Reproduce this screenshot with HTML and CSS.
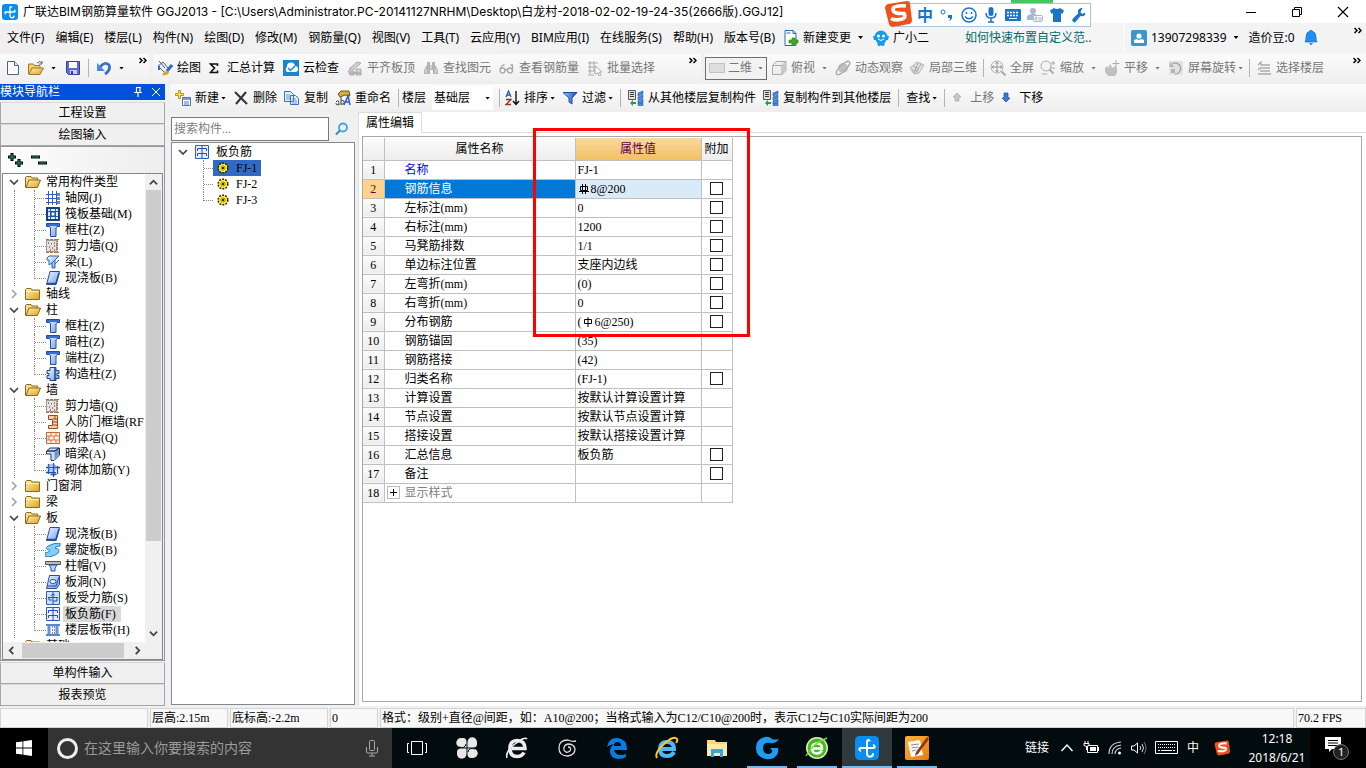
FILE: index.html
```html
<!DOCTYPE html>
<html lang="zh-CN">
<head>
<meta charset="utf-8">
<title>广联达BIM钢筋算量软件 GGJ2013</title>
<link rel="stylesheet" href="styles.css">
</head>
<body>
<svg class="defs" aria-hidden="true">
  <defs>
    <linearGradient id="gFold" x1="0" y1="0" x2="1" y2="1"><stop offset="0" stop-color="#fff0b0"/><stop offset="1" stop-color="#e0a020"/></linearGradient>
    <linearGradient id="gBlue" x1="0" y1="0" x2="1" y2="1"><stop offset="0" stop-color="#f4f8ff"/><stop offset="1" stop-color="#6f9ee8"/></linearGradient>
    <linearGradient id="gFun" x1="0" y1="0" x2="1" y2="0"><stop offset="0" stop-color="#9cc4fa"/><stop offset="1" stop-color="#1a4fc0"/></linearGradient>
    <linearGradient id="gOrange" x1="0" y1="0" x2="1" y2="1"><stop offset="0" stop-color="#ffb43a"/><stop offset="1" stop-color="#e87a10"/></linearGradient>
  </defs>
  <symbol id="app" viewBox="0 0 16 16"><rect width="16" height="16" rx="3" fill="#0a8df0"/><path d="M8 3v9a2 2 0 0 0 4-.5M3 8h10M3 8a1.5 1.5 0 0 0 1 2M13 8a1.5 1.5 0 0 0-1-2M8 3a1.500 1.500 0 0 1 2 .5" fill="none" stroke="#fff" stroke-width="1.300"/></symbol>
  <symbol id="sogou" viewBox="0 0 28 28"><path d="M4 4 23 1q3 0 3 3l2 16q0 3-3 4L9 27q-3 0-4-3L1 8q0-3 3-4z" fill="#f0501e"/><path d="M22 6Q9 5 9 9.500t11 4q3 5-4 6-6 1-9-1" fill="none" stroke="#fff" stroke-width="3.600"/></symbol>
  <symbol id="newch" viewBox="0 0 16 16"><path d="M2 .5h8l3 3v12H2z" fill="#fff" stroke="#2a6aa8"/><path d="M10 .5v3h3M3.500 3h4" fill="none" stroke="#2a6aa8"/><path d="M9 8h3v2h3v3h-3v3H9v-3H6v-3h3z" fill="#3fae1e" stroke="#1d7a10" stroke-width=".6"/></symbol>
  <symbol id="mascot" viewBox="0 0 16 16"><circle cx="8" cy="7" r="6.500" fill="#159be8"/><path d="M0 6h3v4H1zM16 6h-3v4h2zM4 12h8l-1 4H9l-1-1-1 1H5z" fill="#159be8"/><circle cx="5.500" cy="6" r="1.500" fill="#fff"/><circle cx="10.500" cy="6" r="1.500" fill="#fff"/><path d="M5 9q3 3 6 0" fill="none" stroke="#fff"/></symbol>
  <symbol id="user" viewBox="0 0 16 16"><rect width="16" height="16" rx="2" fill="#3c96cc"/><circle cx="8" cy="6" r="2.600" fill="#fff"/><path d="M3 13v-3l3-1q2 2 4 0l3 1v3z" fill="#fff"/></symbol>
  <symbol id="bell" viewBox="0 0 16 16"><path d="M8 0q1 0 1 1 4 1 4 6 0 4 1 5H2q1-1 1-5 0-5 4-6 0-1 1-1z" fill="#1f8ff5" stroke="#1560b0" stroke-width=".6"/><path d="M6 13h4l-2 2.500z" fill="#1f8ff5"/></symbol>
  <symbol id="doc" viewBox="0 0 16 16"><path d="M2.500 1.500h7l4 4v9h-11z" fill="#fff" stroke="#4a6484"/><path d="M9.500 1.500v4h4" fill="#dbe8f6" stroke="#4a6484"/></symbol>
  <symbol id="open" viewBox="0 0 16 16"><path d="M.5 14V4h5l1 1.500H12V8" fill="#f5cf6c" stroke="#9c7a22"/><path d="M1 14.500 4 8h11.500L12 14.500z" fill="url(#gFold)" stroke="#9c7a22"/><path d="M9 3q3-3 5 0m0-2v3h-3" fill="none" stroke="#506878"/></symbol>
  <symbol id="save" viewBox="0 0 16 16"><path d="M1.500 1.500h13v13h-11l-2-2z" fill="#5f6ad2" stroke="#3a3f9c"/><path d="M4 2h8v6H4z" fill="#fff"/><path d="M5 10h7v4H5z" fill="#c8ccf4"/><path d="M6 11h2v3H6z" fill="#333a90"/></symbol>
  <symbol id="undo" viewBox="0 0 16 16"><path d="M4 7q5-6 9-2 2 5-4 9" fill="none" stroke="#3d6fd0" stroke-width="2.800"/><path d="M1 3v8h8z" fill="#4f86e6"/></symbol>
  <symbol id="paint" viewBox="0 0 16 16"><path d="m1 6 5-4 6 7-4 4z" fill="#e8f0fa" stroke="#49627e"/><path d="M2 1l6 7" stroke="#49627e" fill="none"/><path d="m15 5-5 6" stroke="#2f6cc8" stroke-width="3"/><path d="M7 12q3-2 5 0-1 4-7 3z" fill="#d8a520"/><path d="M2 6v4" stroke="#2f6cc8" stroke-width="2"/></symbol>
  <symbol id="sigma" viewBox="0 0 10 16"><path d="M8.500 6V4h-7l4 4-4 4.500h7v-2" fill="none" stroke="#111" stroke-width="1.600"/></symbol>
  <symbol id="cloud" viewBox="0 0 16 16"><rect width="16" height="16" fill="#1785d0"/><path d="M4 12a3 3 0 0 1 0-5 4 4 0 0 1 8-1 3 3 0 0 1 0 6z" fill="#fff"/><path d="m5 8 2.500 2.500L12 6" fill="none" stroke="#1785d0" stroke-width="1.500"/></symbol>
  <symbol id="align" viewBox="0 0 16 16"><path d="m2 9 8-7 4 1-8 7zM1 11h6v4H3zM9 9h5v6H9z" fill="#cfcfcf" stroke="#aaa"/><path d="M3 13h11" stroke="#999"/></symbol>
  <symbol id="binoc" viewBox="0 0 16 16"><path d="M4 2h3v3h2V2h3v3l3 5v4h-5v-4H7v4H1v-4l3-5z" fill="#b4b4b4"/><path d="M3 9v4M13 9v4M8 5v4" stroke="#eee"/></symbol>
  <symbol id="glass" viewBox="0 0 16 16"><g fill="none" stroke="#a8a8a8" stroke-width="1.300"><circle cx="3.500" cy="10.500" r="2.500"/><circle cx="11" cy="10.500" r="2.500"/><path d="M1.500 8.500q2-4 4-3.500M6 10h2.500M13.500 10V5h-2"/></g></symbol>
  <symbol id="batch" viewBox="0 0 16 16"><path d="M1 3h10M1 7h9M1 11h7M3 1v13M7 1v10M1 15h6" stroke="#aaa" fill="none"/><path d="m8 6 7 6-3 .3 2 2.700-2 1-1-3-3 1z" fill="#fff" stroke="#aaa"/></symbol>
  <symbol id="flat" viewBox="0 0 16 16"><path d="M.5 3.500h15v9H.5z" fill="#dedede" stroke="#c0c0c0"/></symbol>
  <symbol id="cube" viewBox="0 0 16 16"><path d="M1.500 5.500 5 1.500h10v9l-4 4H1.500z" fill="#eee" stroke="#aaa"/><path d="M1.500 5.500H11v9M11 5.500l4-4" fill="none" stroke="#aaa"/><path d="M11 6l3.500-3.500v8L11 14z" fill="#c6c6c6"/></symbol>
  <symbol id="orbit" viewBox="0 0 16 16"><circle cx="8" cy="8" r="5" fill="#c0c0c0"/><ellipse cx="8" cy="8" rx="9" ry="3" transform="rotate(-45 8 8)" fill="none" stroke="#aaa" stroke-width="1.300"/></symbol>
  <symbol id="part3d" viewBox="0 0 16 16"><path d="m1 8 7-6 7 3-5 8-5 1z" fill="#e2e2e2" stroke="#b4b4b4"/><path d="m4 6 6 3M9 3l-4 10M12 4l-5 9M3 10l6 1" stroke="#aaa" fill="none"/></symbol>
  <symbol id="full" viewBox="0 0 16 16"><circle cx="7" cy="7" r="6" fill="#f4f4f4" stroke="#aaa"/><path d="M7 2v10M2 7h10M5.500 4 7 2l1.500 2M5.500 10 7 12l1.500-2M4 5.500 2 7l2 1.500M10 5.500 12 7l-2 1.500" fill="none" stroke="#999"/><path d="m11.500 11.500 4 4" stroke="#aaa" stroke-width="2"/></symbol>
  <symbol id="zoomi" viewBox="0 0 16 16"><circle cx="6" cy="6" r="5" fill="#f4f4f4" stroke="#aaa"/><path d="m9.500 9.500 4 4" stroke="#aaa" stroke-width="2"/><path d="M11 3h4M13 1v4M11 8h4M2 14h5" stroke="#aaa"/></symbol>
  <symbol id="hand" viewBox="0 0 16 16"><path d="M1 8l2-2 2 2V5l2-.5L8 8l3-2 2 2v5l-2 3H4l-3-4z" fill="#c0c0c0"/><path d="M12 0v7M8.500 3.500h7" stroke="#aaa"/></symbol>
  <symbol id="rot" viewBox="0 0 16 16"><path d="M1 1h14v14H1z" fill="#e2e2e2"/><path d="M4 4a5.500 5.500 0 1 1 3 10" fill="none" stroke="#aaa" stroke-width="1.500"/><path d="M1.500 2v5h5zM3 9h4v4H3z" fill="#b4b4b4"/></symbol>
  <symbol id="floors" viewBox="0 0 16 16"><path d="m2 5 3-3v3h9M4 8h10M4 11h10M2 14h13M4 8 2 10" fill="none" stroke="#aaa" stroke-width="1.300"/></symbol>
  <symbol id="newc" viewBox="0 0 16 16"><path d="M3.500.5h2v3h3v2h-3v3h-2v-3h-3v-2h3z" fill="#ffe04a" stroke="#a8820a" stroke-width=".8"/><path d="M7.500 7.500h8v8h-8z" fill="#fff" stroke="#4a78c0"/><path d="M8 8h7v2H8z" fill="#78a0e0"/><path d="M9 12h5M9 14h5" stroke="#4a78c0"/></symbol>
  <symbol id="del" viewBox="0 0 16 16"><path d="m2 2 12 12M13 2 3 14" stroke="#333" stroke-width="2"/></symbol>
  <symbol id="copy" viewBox="0 0 16 16"><path d="M.5 1.500h6l3 3v7h-9zM6.500 5.500h5l3 3v6h-8z" fill="#e4efff" stroke="#3f70b8"/><path d="M2 5h4M2 7h4M2 9h4M8 9h4M8 11h5M8 13h5" stroke="#6a98dc"/></symbol>
  <symbol id="rename" viewBox="0 0 16 16"><path d="m3 4 3-3h8l1 5-5-1-5 2z" fill="#d9ac3e" stroke="#6e5a20"/><path d="M1 12q3-4 3 3-4 0-3-2M6 7v8M6 11q4-2 3 3H6" fill="none" stroke="#444"/><path d="m9 15 4-9 2 9M10 12h5" fill="none" stroke="#2f5fc8" stroke-width="1.500"/></symbol>
  <symbol id="sort" viewBox="0 0 16 16"><path d="m2 7 2.500-6L7 7M3 5h3" fill="none" stroke="#2a55b0" stroke-width="1.300"/><path d="M2 9.500h5l-5 5h5" fill="none" stroke="#a02828" stroke-width="1.300"/><path d="M12 1v13m-3-3 3 3.500 3-3.500" fill="none" stroke="#111" stroke-width="1.400"/></symbol>
  <symbol id="filter" viewBox="0 0 16 16"><path d="M1 2.500h14L10 8v6l-3-2V8z" fill="url(#gFun)" stroke="#1c4fae"/></symbol>
  <symbol id="fromf" viewBox="0 0 16 16"><path d="M.5.500h7v9h-7z" fill="#e4e4e4" stroke="#555"/><path d="M2 2.500h4M2 4.500h4M2 6.500h4" stroke="#333"/><path d="m10 3 5-2v3l-5 2zM10 7l5-2v3l-5 2zM10 11l5-2v3l-5 2zM10 14.500l5-2v3h-5z" fill="#4a8ae0" stroke="#1c56a8" stroke-width=".6"/><path d="M2 13l3-3v2h3v2H5v2z" fill="#22a040"/></symbol>
  <symbol id="up" viewBox="0 0 10 16"><path d="m5 3 4 4H7v4H3V7H1z" fill="#c6c6c6" stroke="#aaa" stroke-width=".7"/></symbol>
  <symbol id="down" viewBox="0 0 10 16"><path d="m5 12 4-4H7V3H3v5H1z" fill="#3e76e0" stroke="#1b479c" stroke-width=".7"/></symbol>
  <symbol id="more" viewBox="0 0 8 8"><path d="m.5 1 2.500 2.500L.5 6M4.500 1 7 3.500 4.500 6" fill="none" stroke="#000" stroke-width="1.500"/></symbol>
  <symbol id="mag" viewBox="0 0 16 16"><circle cx="9" cy="6.500" r="4" fill="#e6f4ff" stroke="#4a9ce0" stroke-width="1.800"/><path d="m6 9.500-4 4" stroke="#3a8ad0" stroke-width="2.200"/></symbol>
  <symbol id="fo" viewBox="0 0 16 14"><path d="M.5 12.500v-10l1-1H6l1 1.500h5.500v2" fill="#f7d982" stroke="#8a6a1a"/><path d="M1 12.500 4 5h11.500L12.500 12.500z" fill="url(#gFold)" stroke="#8a6a1a"/></symbol>
  <symbol id="fc" viewBox="0 0 16 14"><path d="M.5 12.500v-10l1-1H6l1 1.500h7.500v9.500z" fill="url(#gFold)" stroke="#8a6a1a"/><path d="M1 4.500h13" stroke="#fff3c0"/></symbol>
  <symbol id="grid" viewBox="0 0 14 14"><path d="M0 3.500h13M0 7.500h13M0 11.500h13M2.500 0v14M6.500 0v14M10.500 0v14" stroke="#2f5cc0"/><path d="M11 2h3v3h-3zM11 6h3v3h-3zM11 10h3v3h-3z" fill="#5f88d8"/></symbol>
  <symbol id="raft" viewBox="0 0 14 14"><path d="M1 1h12v12H1z" fill="#dce9ff" stroke="#14408c" stroke-width="2"/><path d="M4.500 2v10M9.500 2v10M2 4.500h10M2 9.500h10" stroke="#2c60b8"/><path d="M5 5h4v4H5z" fill="#fff" stroke="#14408c"/></symbol>
  <symbol id="col" viewBox="0 0 14 14"><path d="M.5.500h13v3H11l-1 1.500v8.500H4.500V5L3.500 3.500h-3z" fill="url(#gBlue)" stroke="#1f4fa8"/><path d="M1 1h12v2H1z" fill="#3a70cc"/></symbol>
  <symbol id="wall" viewBox="0 0 14 14"><path d="M.5 1.500h10v11H.5z" fill="#e6e3e0" stroke="#a0968c"/><path d="M0 .5h13M0 13.500h13M11.500 0v14" stroke="#cc6a2a" stroke-dasharray="3 1"/><path d="M2 4h1M5 5h1M8 4h1M3 8h1M6 9h1M8 7h1M4 11h1M8 11h1" stroke="#222"/></symbol>
  <symbol id="beam" viewBox="0 0 14 14"><path d="m1 3 2-2h10L9 5v8H6V8L3 10V5H1z" fill="url(#gBlue)" stroke="#2a68b8"/><path d="m6 8 6-6M9 9l4-4" stroke="#2a68b8"/></symbol>
  <symbol id="slab" viewBox="0 0 14 14"><path d="M4 .5h9.500L10 13.500H.5z" fill="url(#gBlue)" stroke="#1f4fa8"/><path d="M1 12.500h9L13 2" fill="none" stroke="#1f4fa8" stroke-width="1.600"/></symbol>
  <symbol id="ccol" viewBox="0 0 14 14"><path d="M4 .5h6v3h3v3h-2v2h2v3h-3v2H4v-2H1v-3h2v-2H1v-3h3z" fill="url(#gBlue)" stroke="#1a4488"/><path d="M9 1v12" stroke="#1a4488" stroke-width="1.500"/></symbol>
  <symbol id="rf" viewBox="0 0 14 14"><path d="M2.500.500h9v13h-9v-3h4v-6h-4z" fill="#f8cfae" stroke="#9a4a1c"/><path d="M7 4h4M7 7h4M7 10h4M9 1v3" stroke="#9a4a1c"/></symbol>
  <symbol id="brick" viewBox="0 0 14 14"><path d="M.5 1.500h13v11H.5z" fill="#fff0e4" stroke="#c06a38"/><path d="M1 5h12M1 9h12M5 2v3M10 2v3M3 5v4M8 5v4M5 9v4M10 9v4" stroke="#d07a48"/></symbol>
  <symbol id="hbeam" viewBox="0 0 14 14"><path d="M.5 4 4 1h9.500v7L8 13.500H5V7H.5z" fill="#cfe0fa" stroke="#1c3866"/><path d="M1 4h8l4-3" stroke="#1c3866" fill="none" stroke-width="1.500"/><path d="M8.500 5 13 2v5l-4.500 5z" fill="#6f94cc"/></symbol>
  <symbol id="brebar" viewBox="0 0 14 14"><path d="M0 4.500h14M0 9.500h10M2.500 1v10M7.500 0v14M4.500 11.500h6M11.500 3v8" stroke="#1f4fb8" stroke-width="1.300"/><path d="M3 2h6v5H3z" fill="none" stroke="#4f86e0"/></symbol>
  <symbol id="spiral" viewBox="0 0 16 14"><path d="M15 0Q8 0 3 3q-4 3 1 4 3 1-4 3v4q9 0 13-4 3-4-3-5 0-2 5-2z" fill="#84cdf4" stroke="#2a80c8"/></symbol>
  <symbol id="cap" viewBox="0 0 16 14"><path d="M.5 2.500h15v3H.5z" fill="#bbb" stroke="#555"/><path d="M4 6h8l-2 3v3H6V9z" fill="#bcd6ff" stroke="#1f4fb8"/></symbol>
  <symbol id="hole" viewBox="0 0 14 14"><path d="M3.500.500h10v9l-3 4H.5z" fill="url(#gBlue)" stroke="#1f4fa8"/><ellipse cx="7" cy="6.500" rx="3" ry="2" fill="#fff" stroke="#1f4fa8"/><path d="M1 11h9l3-9" fill="none" stroke="#1f4fa8"/></symbol>
  <symbol id="sreb" viewBox="0 0 14 14"><path d="M.5.500h13v13H.5z" fill="#cfe0fc" stroke="#2a5cc0"/><path d="M7 1v12M2 6.500h10M3 6v3h3M11 7v3H7M9 4q-3-2-4 1" fill="none" stroke="#2450a0"/></symbol>
  <symbol id="neg" viewBox="0 0 14 14"><path d="M.5.500h13v13H.5z" fill="#e8f0ff" stroke="#2a5cc0"/><path d="M7 1v12M2.500 6V3.500h9V6M2.500 11V8.500h9V11" fill="none" stroke="#1f4fb8"/></symbol>
  <symbol id="band" viewBox="0 0 16 14"><path d="M1 2h14M1 12h14" stroke="#2a5cc0" stroke-width="1.500"/><path d="M4 3v8M12 3v8" stroke="#5f92e0" stroke-width="3"/><path d="M7.500 3v8M9.500 3v8" stroke="#555" stroke-width=".7" stroke-dasharray="2 1"/></symbol>
  <symbol id="gear" viewBox="0 0 12 12"><circle cx="6" cy="6" r="4.600" fill="#ffee20" stroke="#2a2600" stroke-width="2" stroke-dasharray="1.800 1.100"/><circle cx="6" cy="6" r="4" fill="#ffee20"/><path d="M6 3v6M3 6h6M4 4l4 4M8 4 4 8" stroke="#5a5200" stroke-width=".6"/><circle cx="6" cy="6" r="1" fill="#111"/></symbol>
  <symbol id="chd" viewBox="0 0 10 10"><path d="m1 3 4 4 4-4" fill="none" stroke="#444" stroke-width="1.700"/></symbol>
  <symbol id="chr" viewBox="0 0 10 10"><path d="m3 1 4 4-4 4" fill="none" stroke="#a0a0a0" stroke-width="1.500"/></symbol>
  <symbol id="win" viewBox="0 0 16 16"><path d="M0 2.300 6.500 1.400v6.200H0zM7.300 1.300 16 0v7.600H7.300zM0 8.400h6.500v6.200L0 13.700zM7.300 8.400H16V16l-8.700-1.300z" fill="#fff"/></symbol>
</svg>

<div class="window">
  <header class="titlebar">
    <svg class="i16"><use href="#app"/></svg>
    <h1 class="title">广联达BIM钢筋算量软件 GGJ2013 - [C:\Users\Administrator.PC-20141127NRHM\Desktop\白龙村-2018-02-02-19-24-35(2666版).GGJ12]</h1>
    <div class="winbtns">
      <button aria-label="最小化"><svg viewBox="0 0 12 12"><path d="M1 6.500h10" stroke="#000"/></svg></button>
      <button aria-label="还原"><svg viewBox="0 0 12 12"><path d="M1.500 3.500h7v7h-7zM3.500 3.500v-2h7v7h-2" fill="none" stroke="#000"/></svg></button>
      <button aria-label="关闭"><svg viewBox="0 0 12 12"><path d="m1 1 10 10M11 1 1 11" stroke="#000" stroke-width="1.200"/></svg></button>
    </div>
  </header>

  <div class="menurow">
    <nav class="menus">
      <button>文件(F)</button><button>编辑(E)</button><button>楼层(L)</button><button>构件(N)</button><button>绘图(D)</button><button>修改(M)</button><button>钢筋量(Q)</button><button>视图(V)</button><button>工具(T)</button><button>云应用(Y)</button><button>BIM应用(I)</button><button>在线服务(S)</button><button>帮助(H)</button><button>版本号(B)</button>
      <button class="tool"><svg class="i16"><use href="#newch"/></svg>新建变更<i class="caret wide"></i></button>
      <button class="tool"><svg class="i16"><use href="#mascot"/></svg>广小二</button>
    </nav>
    <a class="tip" href="#">如何快速布置自定义范..</a>
    <div class="account">
      <button class="tool"><svg class="i16"><use href="#user"/></svg>13907298339<i class="caret wide"></i></button>
      <button>造价豆:0</button>
      <button aria-label="通知"><svg class="i16"><use href="#bell"/></svg></button>
      <svg class="more"><use href="#more"/></svg>
    </div>
  </div>

  <div class="toolrow">
    <div class="bar bar-file">
      <button class="tool" aria-label="新建"><svg class="i16"><use href="#doc"/></svg></button>
      <button class="tool" aria-label="打开"><svg class="i16"><use href="#open"/></svg><i class="caret wide"></i></button>
      <button class="tool" aria-label="保存"><svg class="i16"><use href="#save"/></svg></button>
      <i class="sep"></i>
      <button class="tool" aria-label="撤销"><svg class="i16"><use href="#undo"/></svg><i class="caret wide"></i></button>
      <svg class="more"><use href="#more"/></svg>
    </div>
    <div class="bar bar-draw">
      <button class="tool"><svg class="i16"><use href="#paint"/></svg>绘图</button>
      <button class="tool sum"><svg class="i10"><use href="#sigma"/></svg>汇总计算</button>
      <button class="tool"><svg class="i16"><use href="#cloud"/></svg>云检查</button>
      <button class="tool" disabled><svg class="i16"><use href="#align"/></svg>平齐板顶</button>
      <button class="tool" disabled><svg class="i16"><use href="#binoc"/></svg>查找图元</button>
      <button class="tool" disabled><svg class="i16"><use href="#glass"/></svg>查看钢筋量</button>
      <button class="tool" disabled><svg class="i16"><use href="#batch"/></svg>批量选择</button>
      <svg class="more"><use href="#more"/></svg>
    </div>
    <div class="bar bar-view">
      <label class="dim-pick"><svg class="i16"><use href="#flat"/></svg><select aria-label="视图维度" disabled><option>二维</option></select><i class="caret"></i></label>
      <button class="tool" disabled><svg class="i16"><use href="#cube"/></svg>俯视<i class="caret wide"></i></button>
      <button class="tool" disabled><svg class="i16"><use href="#orbit"/></svg>动态观察</button>
      <button class="tool" disabled><svg class="i16"><use href="#part3d"/></svg>局部三维</button>
      <i class="sep"></i>
      <button class="tool" disabled><svg class="i16"><use href="#full"/></svg>全屏</button>
      <button class="tool" disabled><svg class="i16"><use href="#zoomi"/></svg>缩放<i class="caret wide"></i></button>
      <button class="tool" disabled><svg class="i16"><use href="#hand"/></svg>平移<i class="caret wide"></i></button>
      <button class="tool" disabled><svg class="i16"><use href="#rot"/></svg>屏幕旋转<i class="caret"></i></button>
      <i class="sep"></i>
      <button class="tool" disabled><svg class="i16"><use href="#floors"/></svg>选择楼层</button>
      <svg class="more"><use href="#more"/></svg>
    </div>
  </div>

  <main class="workspace">
    <aside class="nav">
      <div class="nav-title"><h2>模块导航栏</h2>
        <svg viewBox="0 0 10 10"><path d="M3 .5h5M3.500 1v4M7 1v4M1 5.500h8M5 6v4" fill="none" stroke="#fff" stroke-width="1.200"/></svg>
        <svg viewBox="0 0 10 10"><path d="m1 1 8 8M9 1 1 9" stroke="#fff"/></svg>
      </div>
      <button class="nav-btn">工程设置</button>
      <button class="nav-btn">绘图输入</button>
      <div class="nav-box">
        <div class="nav-tools">
          <svg viewBox="0 0 18 16"><path d="M5 1v8M1 5h8M12 7v8M8 11h8" stroke="#000" stroke-width="3"/><path d="M5 2v6M2 5h6M12 8v6M9 11h6" stroke="#169a8c"/></svg>
          <svg viewBox="0 0 18 16"><path d="M1 5h9M8 11h9" stroke="#000" stroke-width="3"/><path d="M2 5h7M9 11h7" stroke="#169a8c"/></svg>
        </div>
        <div class="tree-box">
          <div class="tree-view">
            <ul class="tree">
              <li><div class="grp"><svg class="ch"><use href="#chd"/></svg><svg class="fold"><use href="#fo"/></svg>常用构件类型</div>
                <ul><li><svg><use href="#grid"/></svg><span>轴网(J)</span></li><li><svg><use href="#raft"/></svg><span>筏板基础(M)</span></li><li><svg><use href="#col"/></svg><span>框柱(Z)</span></li><li><svg><use href="#wall"/></svg><span>剪力墙(Q)</span></li><li><svg><use href="#beam"/></svg><span>梁(L)</span></li><li><svg><use href="#slab"/></svg><span>现浇板(B)</span></li></ul></li>
              <li><div class="grp"><svg class="ch"><use href="#chr"/></svg><svg class="fold"><use href="#fc"/></svg>轴线</div></li>
              <li><div class="grp"><svg class="ch"><use href="#chd"/></svg><svg class="fold"><use href="#fo"/></svg>柱</div>
                <ul><li><svg><use href="#col"/></svg><span>框柱(Z)</span></li><li><svg><use href="#col"/></svg><span>暗柱(Z)</span></li><li><svg><use href="#col"/></svg><span>端柱(Z)</span></li><li><svg><use href="#ccol"/></svg><span>构造柱(Z)</span></li></ul></li>
              <li><div class="grp"><svg class="ch"><use href="#chd"/></svg><svg class="fold"><use href="#fo"/></svg>墙</div>
                <ul><li><svg><use href="#wall"/></svg><span>剪力墙(Q)</span></li><li><svg><use href="#rf"/></svg><span>人防门框墙(RF</span></li><li><svg><use href="#brick"/></svg><span>砌体墙(Q)</span></li><li><svg><use href="#hbeam"/></svg><span>暗梁(A)</span></li><li><svg><use href="#brebar"/></svg><span>砌体加筋(Y)</span></li></ul></li>
              <li><div class="grp"><svg class="ch"><use href="#chr"/></svg><svg class="fold"><use href="#fc"/></svg>门窗洞</div></li>
              <li><div class="grp"><svg class="ch"><use href="#chr"/></svg><svg class="fold"><use href="#fc"/></svg>梁</div></li>
              <li><div class="grp"><svg class="ch"><use href="#chd"/></svg><svg class="fold"><use href="#fo"/></svg>板</div>
                <ul><li><svg><use href="#slab"/></svg><span>现浇板(B)</span></li><li><svg><use href="#spiral"/></svg><span>螺旋板(B)</span></li><li><svg><use href="#cap"/></svg><span>柱帽(V)</span></li><li><svg><use href="#hole"/></svg><span>板洞(N)</span></li><li><svg><use href="#sreb"/></svg><span>板受力筋(S)</span></li><li class="cur"><svg><use href="#neg"/></svg><span>板负筋(F)</span></li><li><svg><use href="#band"/></svg><span>楼层板带(H)</span></li></ul></li>
              <li><div class="grp"><svg class="ch"><use href="#chr"/></svg><svg class="fold"><use href="#fc"/></svg>基础</div></li>
            </ul>
          </div>
          <div class="vbar"><svg viewBox="0 0 10 10"><path d="m1 7 4-4 4 4" fill="none" stroke="#444" stroke-width="2"/></svg><i></i><svg viewBox="0 0 10 10"><path d="m1 3 4 4 4-4" fill="none" stroke="#444" stroke-width="2"/></svg></div>
          <div class="hbar"><svg viewBox="0 0 10 10"><path d="M7 1 3 5l4 4" fill="none" stroke="#444" stroke-width="2"/></svg><i></i><svg viewBox="0 0 10 10"><path d="m3 1 4 4-4 4" fill="none" stroke="#444" stroke-width="2"/></svg></div>
        </div>
      </div>
      <button class="nav-btn">单构件输入</button>
      <button class="nav-btn">报表预览</button>
    </aside>

    <section class="work">
      <div class="bar bar-edit">
        <button class="tool"><svg class="i16"><use href="#newc"/></svg>新建<i class="caret"></i></button>
        <button class="tool"><svg class="i16"><use href="#del"/></svg>删除</button>
        <button class="tool"><svg class="i16"><use href="#copy"/></svg>复制</button>
        <button class="tool"><svg class="i16"><use href="#rename"/></svg>重命名</button>
        <div class="floor"><i class="sep"></i><label for="floor">楼层</label>
          <span class="floor-pick"><select id="floor"><option>基础层</option></select><i class="caret"></i></span><i class="sep"></i></div>
        <button class="tool"><svg class="i16"><use href="#sort"/></svg>排序<i class="caret"></i></button>
        <button class="tool"><svg class="i16"><use href="#filter"/></svg>过滤<i class="caret"></i></button>
        <i class="sep"></i>
        <button class="tool"><svg class="i16"><use href="#fromf"/></svg>从其他楼层复制构件</button>
        <button class="tool"><svg class="i16"><use href="#fromf"/></svg>复制构件到其他楼层</button>
        <i class="sep"></i>
        <button class="tool">查找<i class="caret"></i></button>
        <i class="sep"></i>
        <button class="tool arrow" disabled><svg class="i10"><use href="#up"/></svg>上移</button>
        <button class="tool arrow"><svg class="i10"><use href="#down"/></svg>下移</button>
      </div>
      <div class="panes">
        <div class="comp">
          <div class="search"><input type="text" placeholder="搜索构件..." aria-label="搜索构件"><button aria-label="搜索"><svg class="i16"><use href="#mag"/></svg></button></div>
          <div class="comp-tree">
            <div class="root"><svg class="ch"><use href="#chd"/></svg><svg class="ri"><use href="#neg"/></svg>板负筋</div>
            <ul><li class="on"><span><svg><use href="#gear"/></svg>FJ-1</span></li><li><span><svg><use href="#gear"/></svg>FJ-2</span></li><li><span><svg><use href="#gear"/></svg>FJ-3</span></li></ul>
          </div>
        </div>
        <div class="props">
          <div class="tabs"><button class="tab">属性编辑</button></div>
          <div class="pane"><div class="sheet">
            <table>
              <colgroup><col class="c1"><col class="c2"><col class="c3"><col class="c4"></colgroup>
              <thead><tr><th></th><th>属性名称</th><th class="hot">属性值</th><th>附加</th></tr></thead>
              <tbody>
                <tr><th>1</th><td class="blue">名称</td><td>FJ-1</td><td></td></tr>
                <tr class="sel"><th>2</th><td>钢筋信息</td><td><svg class="dia" viewBox="0 0 12 12"><path d="M2.500 3.500h7v4h-7zM4.500 1v10M7.500 1v10M1 8.500h10" fill="none" stroke="#000"/></svg>8@200</td><td><input type="checkbox" aria-label="钢筋信息"></td></tr>
                <tr><th>3</th><td>左标注(mm)</td><td>0</td><td><input type="checkbox" aria-label="左标注"></td></tr>
                <tr><th>4</th><td>右标注(mm)</td><td>1200</td><td><input type="checkbox" aria-label="右标注"></td></tr>
                <tr><th>5</th><td>马凳筋排数</td><td>1/1</td><td><input type="checkbox" aria-label="马凳筋排数"></td></tr>
                <tr><th>6</th><td>单边标注位置</td><td>支座内边线</td><td><input type="checkbox" aria-label="单边标注位置"></td></tr>
                <tr><th>7</th><td>左弯折(mm)</td><td>(0)</td><td><input type="checkbox" aria-label="左弯折"></td></tr>
                <tr><th>8</th><td>右弯折(mm)</td><td>0</td><td><input type="checkbox" aria-label="右弯折"></td></tr>
                <tr><th>9</th><td>分布钢筋</td><td>(<svg class="dia" viewBox="0 0 12 12"><path d="M2.500 3.500h7v4h-7zM6 1v10" fill="none" stroke="#000"/></svg>6@250)</td><td><input type="checkbox" aria-label="分布钢筋"></td></tr>
                <tr><th>10</th><td>钢筋锚固</td><td>(35)</td><td></td></tr>
                <tr><th>11</th><td>钢筋搭接</td><td>(42)</td><td></td></tr>
                <tr><th>12</th><td>归类名称</td><td>(FJ-1)</td><td><input type="checkbox" aria-label="归类名称"></td></tr>
                <tr><th>13</th><td>计算设置</td><td>按默认计算设置计算</td><td></td></tr>
                <tr><th>14</th><td>节点设置</td><td>按默认节点设置计算</td><td></td></tr>
                <tr><th>15</th><td>搭接设置</td><td>按默认搭接设置计算</td><td></td></tr>
                <tr><th>16</th><td>汇总信息</td><td>板负筋</td><td><input type="checkbox" aria-label="汇总信息"></td></tr>
                <tr><th>17</th><td>备注</td><td></td><td><input type="checkbox" aria-label="备注"></td></tr>
                <tr><th>18</th><td class="gray"><button class="plus" aria-label="展开"><svg viewBox="0 0 11 11"><path d="M2 5.500h7M5.500 2v7" stroke="#000"/></svg></button>显示样式</td><td></td><td></td></tr>
              </tbody>
            </table>
            <div class="marker"></div>
          </div></div>
        </div>
      </div>
    </section>
  </main>

  <footer class="status"><span class="s1"></span><span class="s2">层高:2.15m</span><span class="s3">底标高:-2.2m</span><span class="s4">0</span><span class="s5">格式：级别+直径@间距，如：A10@200；当格式输入为C12/C10@200时，表示C12与C10实际间距为200</span><span class="s6">70.2 FPS</span></footer>
</div>

<div class="taskbar">
  <button class="start" aria-label="开始"><svg class="i16"><use href="#win"/></svg></button>
  <label class="cortana"><i class="ring"></i><input type="text" placeholder="在这里输入你要搜索的内容" aria-label="搜索"><svg viewBox="0 0 14 18"><rect x="4.500" y="1.500" width="5" height="10" rx="1" fill="none" stroke="#aaa"/><path d="M1.500 8v5q0 1 1 1h9q1 0 1-1V8M7 14v3M4 17h6" fill="none" stroke="#aaa"/></svg></label>
  <div class="apps">
    <button aria-label="任务视图"><svg viewBox="0 0 24 24"><path d="M6.500 5.500h11v13h-11zM4 7.500H2.500v9H4M20 7.500h1.500v9H20" fill="none" stroke="#fff"/></svg></button>
    <button aria-label="应用中心"><svg viewBox="0 0 24 24"><g fill="#e8e8e8"><path d="M11.500 11.500H6A4.700 4.700 0 0 1 6 2h2q3.500 0 3.500 4z"/><path d="M12.500 11.500V6a4.700 4.700 0 0 1 9.500 0v2q0 3.500-4 3.500z"/><path d="M12.500 12.500H18a4.700 4.700 0 0 1 0 9.500h-2q-3.500 0-3.500-4z"/><path d="M11.500 12.500V18A4.700 4.700 0 0 1 2 18v-2q0-3.500 4-3.500z"/></g><path d="M4 11q6 2 7-3M20 13q-6-2-7 3" fill="none" stroke="#020b0e"/></svg></button>
    <button aria-label="浏览器"><svg viewBox="0 0 24 24"><path d="M7 12.500h13q0-8-8-8-7 0-7 8t7 8q5 0 7-4" fill="none" stroke="#eee" stroke-width="3.600"/><path d="M2 22Q0 16 10 8T22 3" fill="none" stroke="#eee" stroke-width="1.600"/></svg></button>
    <button aria-label="广联达"><svg viewBox="0 0 24 24"><path d="M21 5q-4 1-8-1-9 0-9 8t9 8q7-1 7-7-1-5-7-5-5 1-4 6 2 4 6 1 2-4-2-4" fill="none" stroke="#ddd" stroke-width="1.300"/></svg></button>
    <button aria-label="Edge"><svg viewBox="0 0 24 24"><path d="M2 11Q4 1 13 2q9 1 9 12H9q1 5 7 5 3 0 5-1v3q-3 2-8 2-8-1-8-8 0-4 4-7-5 1-7 3zm7-1h7q0-4-3.500-4T9 10z" fill="#0a7be0"/></svg></button>
    <button aria-label="IE"><svg viewBox="0 0 24 24"><path d="M7 13h12q0-7-7-7t-7 7 7 7q5 0 7-4" fill="none" stroke="#4fb8f4" stroke-width="4"/><path d="M2 22Q-1 17 9 8T22 3q1 1-1 4" fill="none" stroke="#ffc820" stroke-width="2"/></svg></button>
    <button aria-label="文件资源管理器"><svg viewBox="0 0 24 24"><path d="M2 4h8l1 2h11v14H2z" fill="#f8d775"/><path d="M2 8h20v12H2z" fill="#ffe9a6"/><path d="M6 21v-8h12v8h-3v-4H9v4z" fill="#38a8dc"/></svg></button>
    <button class="run" aria-label="广联达云"><svg viewBox="0 0 24 24"><path d="M24 3q-3 5-9 4-7-1-7 5t6 6q4-1 3-4l-2-2h8q1 5-2 8-4 4-10 3Q1 21 1 12 1 3 10 1q4-1 7 2 3 1 7 0z" fill="#1e9cf4"/></svg></button>
    <button class="run" aria-label="360浏览器"><svg viewBox="0 0 24 24"><circle cx="12" cy="12" r="11" fill="#d8f0c8"/><circle cx="12" cy="12" r="9.500" fill="#46b820"/><path d="M8 12.500h9q0-5-5-5t-5 5 5 5q3 0 5-3" fill="none" stroke="#fff" stroke-width="2.500"/><path d="M1 20Q8 7 22 2" fill="none" stroke="#7ddb3e" stroke-width="1.500"/></svg></button>
    <button class="run active" aria-label="广联达BIM钢筋算量"><svg viewBox="0 0 16 16"><use href="#app"/></svg></button>
    <button class="run" aria-label="便签"><svg viewBox="0 0 24 24"><rect width="24" height="24" rx="2" fill="url(#gOrange)"/><path d="m3 6 12-2 3 15-12 2z" fill="#fff"/><path d="m6 9 8-1M6.500 12l7-1M7 15l4-1" stroke="#888"/><path d="M22 1 11 16l-1 4 3-2L24 3z" fill="#8a3c10"/></svg></button>
  </div>
  <div class="tray">
    <span class="links">链接</span>
    <svg class="t16" viewBox="0 0 16 16"><path d="m2.500 11 5.500-6 5.500 6" fill="none" stroke="#fff" stroke-width="1.400"/></svg>
    <svg class="t16" viewBox="0 0 16 16"><path d="M4.500 5.500h10v7h-10zM15.500 7v4" fill="none" stroke="#fff"/><path d="M7 7h6v4H7z" fill="#fff"/><path d="M1 3.500h5v2q-2.500 2-5 0zM3.500 6v4M2 1v2M5 1v2" fill="#020b0e" stroke="#fff"/></svg>
    <svg class="t16" viewBox="0 0 16 16"><g fill="none" stroke="#ccc" stroke-width="1.200"><path d="M2 14Q2 3 14 2M5 14Q5 6 14 5M8 14Q8 9 14 8"/></g><circle cx="12.500" cy="13" r="1.500" fill="#fff"/></svg>
    <svg class="t16" viewBox="0 0 16 16"><path d="M.5 6h2.500l3.500-3v10L3 10H.5z" fill="none" stroke="#fff"/><path d="M9 6q1.500 2 0 4M11 4q3 4 0 8" fill="none" stroke="#ddd"/><path d="M13 2q4 6 0 12" fill="none" stroke="#777"/></svg>
    <svg class="kb" viewBox="0 0 24 14"><path d="M.5.500h22v12H.5z" fill="none" stroke="#fff"/><path d="M3 3.500h18M3 6.500h18" stroke="#fff" stroke-dasharray="1 1"/><path d="M3 9.500h2M6 9.500h11M18 9.500h2" stroke="#fff"/></svg>
    <span class="lang">中</span>
    <svg class="t16" viewBox="0 0 28 28"><use href="#sogou"/></svg>
  </div>
  <div class="clock"><span>12:18</span><span>2018/6/21</span></div>
  <button class="notes" aria-label="通知中心"><svg viewBox="0 0 26 24"><path d="M1 1h16v12H8l-3 3v-3H1z" fill="#fff"/><path d="M4 4.500h10M4 7h10M4 9.500h10" stroke="#000"/><circle cx="17" cy="16" r="7.500" fill="#222" stroke="#777"/></svg><b>1</b></button>
</div>

<div class="green-tab"></div>
<div class="ime">
  <svg class="ime-logo" viewBox="0 0 28 28"><use href="#sogou"/></svg>
  <b>中</b>
  <svg viewBox="0 0 16 16"><circle cx="4" cy="5" r="2" fill="none" stroke="#1c74c8"/><path d="M9 8h4v3q-1 3-3 3 1-1 1-3H9z" fill="#1c74c8"/></svg>
  <svg viewBox="0 0 16 16"><circle cx="8" cy="8" r="7" fill="none" stroke="#1c74c8" stroke-width="1.500"/><path d="M5.500 5v2M10.500 5v2M4 9.500q4 4.500 8 0" fill="none" stroke="#1c74c8" stroke-width="1.500"/></svg>
  <svg viewBox="0 0 16 16"><rect x="5.500" y="0" width="5" height="9" rx="2.500" fill="#1c74c8"/><path d="M3 6q0 5 5 5t5-5M8 11v4M5 15h6" fill="none" stroke="#1c74c8" stroke-width="1.500"/></svg>
  <svg viewBox="0 0 16 16"><rect y="2" width="16" height="12" rx="1" fill="#1c74c8"/><path d="M2 5.500h12M2 8.500h12" stroke="#fff" stroke-width="1.500" stroke-dasharray="2 1"/><path d="M4 11.500h8" stroke="#fff"/></svg>
  <svg viewBox="0 0 16 16"><circle cx="6" cy="4" r="3" fill="#a8b8d0"/><path d="M0 13V9l4-2h5v6z" fill="#a8b8d0"/><rect x="6.500" y="8.500" width="9" height="6" rx="1" fill="#fff" stroke="#a8b8d0"/><path d="M8 10h2v1.500H8V13h2M12 10v3h2v-3" fill="none" stroke="#a8b8d0"/></svg>
  <svg viewBox="0 0 16 16"><path d="M5 1q3 2 6 0l4 2.500L13.500 7 12 6v9H4V6L2.500 7 1 3.500z" fill="#1c74c8"/></svg>
  <svg viewBox="0 0 16 16"><path d="M14 5.500 11 7 9.500 5 11.500 1Q6 1 7 6.500L1.500 12q-1 1 .5 2.500t2.500.5L9.500 9Q15 10 14 5.500z" fill="#1c74c8"/></svg>
</div>
</body>
</html>
```

FILE: styles.css
```css
* { box-sizing: border-box; }
body {
  margin: 0;
  height: 100vh;
  display: flex;
  flex-direction: column;
  overflow: hidden;
  position: relative;
  background: #f0f0f0;
  color: #000;
  font: 12px/16px "Noto Sans", "Noto Sans CJK SC", sans-serif;
}
button, input, select { font: inherit; color: inherit; margin: 0; padding: 0; border: 0; background: none; }
button { white-space: nowrap; }
svg { display: block; flex: none; }
h1, h2, ul { margin: 0; padding: 0; font-size: 12px; font-weight: 400; list-style: none; }
.defs { position: absolute; width: 0; height: 0; }
.i16 { width: 16px; height: 16px; }
.i10 { width: 10px; height: 16px; }

.window { flex: 1; min-height: 0; display: flex; flex-direction: column; }
.titlebar { height: 23px; flex: none; display: flex; align-items: center; gap: 5px; padding-left: 2px; background: #fff; }
.title { flex: 1; white-space: nowrap; font-family: Inter, "Noto Sans CJK SC", sans-serif; }
.winbtns { display: flex; align-items: center; }
.winbtns button { width: 46px; height: 22px; display: grid; place-items: center; }
.winbtns svg { width: 12px; height: 12px; }

.menurow { height: 31px; flex: none; display: flex; padding-bottom: 2px; background: linear-gradient(90deg, #efefef, #f6f6f6); }
.menus { display: flex; align-items: center; gap: 11px; width: 937px; padding-left: 7px; }
.menus .tool { margin-left: -3px; }
.tip { flex: 1; align-self: center; padding-left: 28px; color: #006b6b; text-decoration: none; }
.account { width: 242px; display: flex; align-items: center; gap: 8px; padding: 0 4px 0 6px; background: #f3f3f3; border-left: 1px solid #fff; }
.tool { display: flex; align-items: center; gap: 4px; }
.tool:disabled { color: #777; }
.caret { flex: none; width: 5px; height: 3px; background: currentColor; clip-path: polygon(0 0, 100% 0, 50% 100%); }
.tool .caret { margin-left: -2px; }
.tool .caret.wide { margin: 0 2px 0 3px; }
.more { width: 8px; height: 8px; margin-left: auto; align-self: flex-start; }
.account .more { margin-top: 4px; }

.toolrow { height: 30px; flex: none; display: flex; gap: 4px; }
.bar { display: flex; align-items: center; gap: 8px; background: linear-gradient(#fbfbfb, #eeeeee); }
.toolrow .bar { padding-bottom: 2px; }
.sep { flex: none; width: 1px; height: 18px; background: #b4b4b4; }
.bar .more { margin-top: 3px; }
.bar-file { width: 149px; padding: 0 2px 0 5px; gap: 7px; }
.bar-draw { width: 548px; padding: 0 4px; }
.bar-draw .sum { gap: 8px; }
.bar-view { flex: 1; padding-right: 5px; gap: 6px; }
.dim-pick { width: 62px; height: 23px; display: flex; align-items: center; gap: 3px; padding: 0 3px; border: 1px solid #6e6e6e; background: #f2f2f2; color: #777; margin-right: -2px; }
.dim-pick select { flex: 1; min-width: 0; }
select { appearance: none; }
select:disabled { color: #777; opacity: 1; }

.workspace { flex: 1; min-height: 0; display: flex; gap: 5px; }
.nav { width: 166px; flex: none; display: flex; flex-direction: column; padding-right: 1px; font-family: "Liberation Serif", "Noto Sans CJK SC", serif; }
.nav-title { height: 16px; flex: none; margin: 0 0 2px; display: flex; align-items: center; gap: 8px; padding-right: 4px; background: #0050dc; color: #fff; }
.nav-title h2 { flex: 1; line-height: 15px; }
.nav-title svg { width: 10px; height: 10px; }
.nav-btn { height: 22px; flex: none; border: 1px solid #a6a6a6; border-top-color: #d8d8d8; background: #f0f0f0; line-height: 18px; }
.nav-box { flex: 1; min-height: 0; margin: 0 0 1px; display: flex; flex-direction: column; border: 1px solid #999; }
.nav-tools { height: 26px; flex: none; display: flex; align-items: center; gap: 5px; padding-left: 6px; background: linear-gradient(90deg, #fdfdfd, #ededed); }
.nav-tools svg { width: 18px; height: 16px; }
.tree-box { flex: 1; min-height: 0; margin: 0 1px; display: grid; grid-template: minmax(0, 1fr) 17px / minmax(0, 1fr) 17px; border: 1px solid #828790; background: #fff; }
.tree-view { overflow: hidden; }
.tree { line-height: 16px; white-space: nowrap; }
.grp { height: 16px; display: flex; align-items: center; gap: 5px; padding-left: 6px; }
.ch { width: 10px; height: 10px; }
.fold { width: 16px; height: 14px; }
.grp .fold { margin-left: 1px; }
.tree ul { margin-left: 11px; padding-left: 19px; border-left: 1px dotted #888; }
.tree li li { height: 16px; display: flex; align-items: center; }
.tree li li::before { content: ""; flex: none; width: 11px; height: 16px; margin-right: -1px; border-left: 1px dotted #888; background: repeating-linear-gradient(90deg, #888 0 1px, transparent 1px 2px) 0 8px / 100% 1px no-repeat; }
.tree li li:last-child::before { height: 9px; align-self: flex-start; }
.tree li li svg { width: 16px; height: 14px; }
.tree li li span { flex: none; margin-left: 2px; padding: 0 5px 0 2px; }
.tree .cur span { background: #d9d9d9; }
.vbar, .hbar { display: flex; align-items: center; background: #f0f0f0; }
.vbar { flex-direction: column; padding: 4px 0; gap: 3px; }
.hbar { grid-column: 1 / -1; padding: 0 20px 0 4px; gap: 6px; }
.vbar svg, .hbar svg { width: 9px; height: 9px; }
.vbar i { width: 15px; flex: 0 0 351px; margin-bottom: auto; background: #cdcdcd; }
.hbar i { height: 15px; width: 102px; margin-right: auto; background: #cdcdcd; }

.work { flex: 1; min-width: 0; display: flex; flex-direction: column; }
.bar-edit { height: 28px; flex: none; padding-left: 4px; gap: 7px; }
.floor { display: flex; align-items: center; gap: 3px; margin-right: -3px; }
.floor-pick { width: 61px; height: 24px; margin: 0 3px; display: flex; align-items: center; padding: 0 3px 0 2px; background: #fff; }
.floor-pick select { flex: 1; min-width: 0; }
.tool.arrow { gap: 8px; }
.panes { flex: 1; min-height: 0; display: flex; gap: 3px; }
.comp { width: 184px; flex: none; display: flex; flex-direction: column; padding: 5px 0 1px; font-family: "Liberation Serif", "Noto Sans CJK SC", serif; }
.search { display: flex; gap: 5px; height: 24px; margin-bottom: 1px; }
.search input { width: 158px; height: 24px; border: 1px solid #7a7a7a; background: #fff; padding: 0 2px; }
.search input::placeholder { color: #808080; opacity: 1; }
.comp-tree { flex: 1; border: 1px solid #828790; background: #fff; padding-top: 1px; }
.root { display: flex; align-items: center; height: 16px; padding-left: 6px; gap: 7px; }
.ri { width: 14px; height: 14px; }
.comp-tree ul { margin-left: 31px; }
.comp-tree li { height: 16px; display: flex; align-items: center; }
.comp-tree li::before { content: ""; width: 9px; height: 16px; border-left: 1px dotted #888; background: repeating-linear-gradient(90deg, #888 0 1px, transparent 1px 2px) 0 8px / 100% 1px no-repeat; }
.comp-tree li:last-child::before { height: 9px; align-self: flex-start; }
.comp-tree li span { display: flex; align-items: center; gap: 7px; height: 16px; padding: 0 4px; }
.comp-tree li svg { width: 12px; height: 12px; }
.comp-tree .on span { background: #316ac5; }

.props { flex: 1; min-width: 0; display: flex; flex-direction: column; font-family: "Liberation Serif", "Noto Sans CJK SC", serif; }
.tabs { height: 21px; flex: none; background: #fff; display: flex; border-bottom: 1px solid #dcdcdc; }
.tab { width: 64px; height: 21px; border: 1px solid #dcdcdc; border-bottom-color: #fff; background: #fff; line-height: 18px; }
.pane { flex: 1; min-height: 0; padding: 3px 4px 4px 3px; background: #fff; border-left: 1px solid #dcdcdc; }
.sheet { height: 100%; border: 1px solid #a8a8a8; padding: 1px 0; position: relative; }
table { border-collapse: collapse; table-layout: fixed; width: 369px; line-height: 16px; }
.c1 { width: 21px; } .c2 { width: 191px; } .c3 { width: 126px; } .c4 { width: 31px; }
th { font-weight: 400; padding: 0; border: 1px solid #c0c0c0; border-left: 0; background: linear-gradient(#fbfbfb, #ededed); }
thead tr { height: 22px; }
thead th { border-top: 0; }
thead .hot { background: linear-gradient(#f8d8a0, #f2c062); color: #5a0050; }
tbody tr { height: 19px; }
td { padding: 0 0 0 2px; border: 1px solid #c0c0c0; white-space: nowrap; }
td:nth-child(2) { padding: 1px 0 0 20px; }
td:nth-child(4) { padding: 0; }
td input { display: block; appearance: none; width: 13px; height: 13px; margin: 0 auto; border: 1px solid #222; background: #fff; }
.blue { color: #00f; }
.gray { color: #808080; }
.sel th { background: #ffd388; color: #5a0050; }
.sel td:nth-child(2) { background: #0078d7; color: #fff; }
.sel td:nth-child(3) { background: #d9eaf9; }
.dia { display: inline-block; width: 12px; height: 12px; margin-right: 1px; vertical-align: -2px; }
.plus { float: left; width: 13px; height: 13px; margin: 1px 0 0 -18px; border: 1px solid #bbb; }
.plus svg { width: 11px; height: 11px; }
.marker { position: absolute; left: 170px; top: -9px; width: 217px; height: 209px; border: 3px solid #f00; pointer-events: none; }

.status { height: 22px; flex: none; display: flex; gap: 2px; padding: 2px 0 0; font-family: "Liberation Serif", "Noto Sans CJK SC", serif; }
.status span { border: 1px solid #d4d4d4; background: #f8f8f8; line-height: 18px; padding-left: 1px; white-space: nowrap; overflow: hidden; }
.s1 { width: 148px; } .s2 { width: 78px; } .s3 { width: 98px; } .s4 { width: 48px; } .s5 { flex: 1; } .s6 { width: 70px; }

.taskbar { height: 40px; flex: none; display: flex; background: #020b0e; color: #fff; }
.start { width: 48px; display: grid; place-items: center; background: #000; }
.cortana { width: 344px; display: flex; align-items: center; gap: 6px; padding: 0 13px 0 9px; background: #333; }
.ring { width: 21px; height: 21px; border: 3px solid #eee; border-radius: 50%; }
.cortana input { flex: 1; min-width: 0; font-size: 14px; line-height: 20px; }
.cortana input::placeholder { color: #9a9a9a; opacity: 1; }
.cortana svg { width: 14px; height: 18px; }
.apps { display: flex; flex: 1; }
.apps button { width: 50px; display: grid; place-items: center; position: relative; }
.apps svg { width: 24px; height: 24px; }
.run::after { content: ""; position: absolute; left: 5px; right: 5px; bottom: 0; height: 2px; background: #76b9ed; }
.active { background: #30393c; }
.run.active::after { left: 0; right: 0; }
.tray { display: flex; align-items: center; gap: 8px; margin-right: 14px; }
.links { margin-right: 2px; }
.lang { margin-right: 7px; }
.t16 { width: 16px; height: 16px; }
.kb { width: 24px; height: 14px; }
.clock { width: 66px; display: flex; flex-direction: column; justify-content: center; line-height: 19px; text-align: center; }
.notes { width: 56px; position: relative; background: #000; }
.notes svg { width: 26px; height: 24px; margin-left: 14px; }
.notes b { position: absolute; left: 28px; top: 16px; font-weight: 400; font-size: 11px; line-height: 16px; }

.green-tab { position: absolute; left: 1011px; top: 0; width: 42px; height: 4px; background: #45c860; }
.ime { position: absolute; left: 897px; top: 3px; width: 194px; height: 24px; display: flex; align-items: center; gap: 6px; padding-left: 19px; background: #fff; border: 1px solid #a9c4dc; color: #1c74c8; }
.ime svg { width: 16px; height: 16px; }
.ime b { font-size: 16px; line-height: 20px; }
.ime .ime-logo { position: absolute; left: -14px; top: -4px; width: 28px; height: 28px; }
```
